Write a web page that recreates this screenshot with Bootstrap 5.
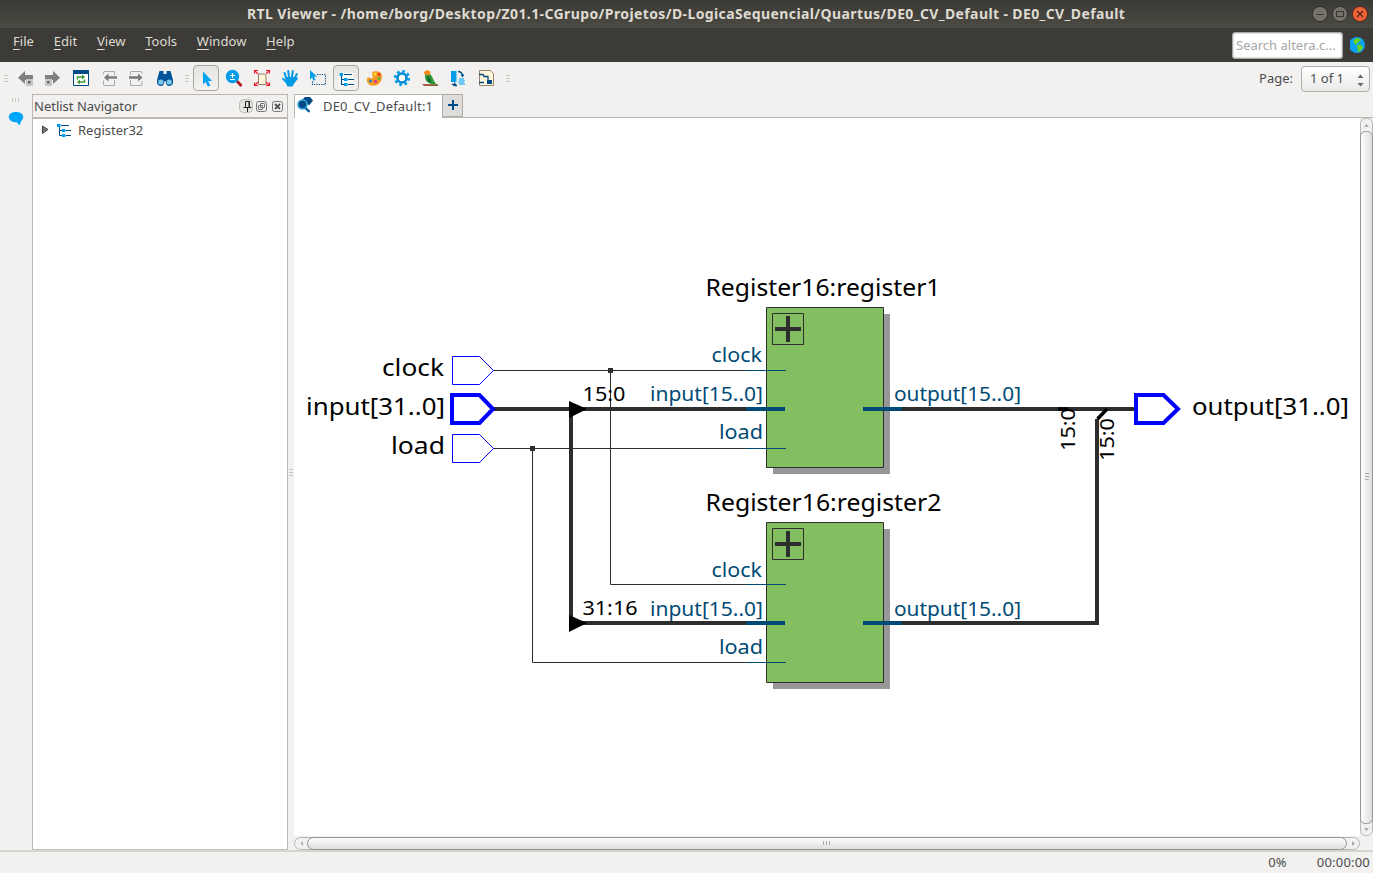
<!DOCTYPE html>
<html lang="en">
<head>
<meta charset="utf-8">
<title>RTL Viewer</title>
<link href="https://cdn.jsdelivr.net/npm/bootstrap@5.3.0/dist/css/bootstrap.min.css" rel="stylesheet">
<script src="https://cdn.jsdelivr.net/npm/bootstrap@5.3.0/dist/js/bootstrap.bundle.min.js"></script>
<style>
body{width:1373px;height:873px;overflow:hidden;background:#f2f1f0;font-family:"Noto Sans","Open Sans",sans-serif;font-size:13px;line-height:18px;color:#4c4c4c}
svg{display:block;flex:none}
.titlebar{height:28px;background:linear-gradient(#3a3934,#4b4a43);color:#dfdbd2;font-weight:700;font-size:14px}
.title-text{margin-left:247px;letter-spacing:.39px;white-space:nowrap}
.winbtns{margin-right:5px;gap:4px}
.menubar{height:34px;background:#3c3b37;color:#dfdbd2}
.menubar a{color:#dfdbd2;text-decoration:none;white-space:nowrap;letter-spacing:.05px}
.menubar a::first-letter{text-decoration:underline;text-underline-offset:3px}
.menus{padding:4px 0 0 13px;gap:19.7px}
.search{width:111px;height:27px;margin:4px 7px 0 0;border:1px solid #aaa8a4;border-radius:3px;background:#fff;color:#a6a6a6;padding:3px 3px;white-space:nowrap;box-shadow:inset 0 0 2px #999}
.toolbar{height:32px}
.tool{width:28px;height:32px}
.tool.on{position:relative}
.tool.on::before{content:"";position:absolute;left:1px;top:3px;width:26px;height:26px;border:1px solid #a9a7a3;border-radius:4px;background:linear-gradient(#e4e3e1,#f4f3f2)}
.tool svg{position:relative}
.page-label{padding-top:3px}
.spin{width:69px;height:26px;border:1px solid #b0aeaa;border-radius:4px;background:linear-gradient(#fff,#ebeae8);padding:3px 4px 0 8px}
.work{height:756px}
.strip{width:32px}
.navpane{width:256px;border:1px solid #bab6b1;border-bottom-color:#c4c1bd;background:#fff}
.navhead{height:24px;background:#f2f1f0;border-bottom:2px solid #bdbab5;padding-left:1px}
.navrow{height:22px}
.tabs{height:24px;border-bottom:1px solid #bab6b1}
.doc-tab{width:148px;height:24px;background:#fff;border:1px solid #bab6b1;border-bottom:0;border-right:0}
.doc-tab span{padding-top:2px;letter-spacing:.18px}
.add-tab{width:21px;height:23px;background:#dfdddb;border:1px solid #b0ada9}
.split{width:6px}
.status{height:23px;border-top:2px solid #d6d4d1;padding:1px 3px 0 0;letter-spacing:.2px;gap:30px}
</style>
</head>
<body>
<div class="d-flex flex-column h-100">
<header class="titlebar d-flex align-items-center justify-content-between">
  <div class="title-text">RTL Viewer - /home/borg/Desktop/Z01.1-CGrupo/Projetos/D-LogicaSequencial/Quartus/DE0_CV_Default - DE0_CV_Default</div>
  <div class="winbtns d-flex">
    <svg width="16" height="16"><circle cx="8" cy="8" r="7.6" fill="#74726b" stroke="#302f2b"/><path d="M4.5 8.5h7" stroke="#34332f"/></svg>
    <svg width="16" height="16"><circle cx="8" cy="8" r="7.6" fill="#74726b" stroke="#302f2b"/><path d="M4.5 5.5h7v5h-7z" fill="none" stroke="#34332f"/></svg>
    <svg width="16" height="16"><circle cx="8" cy="8" r="7.6" fill="#ef6137" stroke="#54291b"/><path d="M5 5l6 6M11 5l-6 6" stroke="#54291b" stroke-width="1.3"/></svg>
  </div>
</header>
<nav class="menubar d-flex justify-content-between">
  <div class="menus d-flex"><a class="d-block">File</a><a class="d-block">Edit</a><a class="d-block">View</a><a class="d-block">Tools</a><a class="d-block">Window</a><a class="d-block">Help</a></div>
  <div class="d-flex">
    <div class="search">Search altera.c...</div>
    <svg width="23" height="34"><circle cx="7" cy="17" r="8" fill="#0aa2f5"/><path d="M3.500 12.500q2-3 5-2.500l1 1.500 2 .5-2 1-1.500 2-2 .5 1 2-3-2zM7 17l3-.5 3 2-1.500 3.500-3.500 2.500-.5-4z" fill="#6ad21d"/></svg>
  </div>
</nav>
<div class="toolbar d-flex">
  <svg width="11" height="32"><path d="M4 13.5h4M4 16.5h4M4 19.5h4" stroke="#c9c7c4"/></svg>
  <div class="tool"><svg width="28" height="32"><path d="M7 15.7L14 9v4h8v5h-8v4z" fill="#7f7f7f"/><path d="M15 17h7v7h-7z" fill="#c6c6c6"/><path d="M17 19h2.5v2.5H17z" fill="#666"/></svg></div>
  <div class="tool"><svg width="28" height="32"><path d="M21 15.7L14 9v4H6v5h8v4z" fill="#7f7f7f"/><path d="M6 17h7v7H6z" fill="#c6c6c6"/><path d="M8 19h2.5v2.5H8z" fill="#666"/></svg></div>
  <div class="tool"><svg width="28" height="32"><path d="M6.500 8.500h15v15h-15z" fill="#fff" stroke="#004b83"/><path d="M6 8h16v4H6z" fill="#004b83"/><path d="M10.500 17.500v-2.500h5M17.500 17.500V20h-5" fill="none" stroke="#3d9b35" stroke-width="1.500"/><path d="M15 12.500l3.200 2.500-3.200 2.500zM13 17.500l-3.200 2.500 3.200 2.500z" fill="#3d9b35"/></svg></div>
  <div class="tool"><svg width="28" height="32"><path d="M8.500 12.500V10.500q0-1 1-1h10V13M8.500 18.500v3.500q0 1.500 1 1.500h10V18" fill="none" stroke="#aaa" /><path d="M9 15.500l4.500-4v2.800H22v2.500h-8.500v2.700z" fill="#7b7b7b"/></svg></div>
  <div class="tool"><svg width="28" height="32"><path d="M7.500 13V9.500h10.500q1 0 1 1V12M7.500 18v5.500h10.500q1 0 1-1V19" fill="none" stroke="#aaa"/><path d="M19.500 15.500l-4.500-4v2.800H6v2.500h9v2.700z" fill="#7b7b7b"/></svg></div>
  <div class="tool"><svg width="28" height="32"><path d="M8.500 9h4v3h3V9h4l2.500 9v3q-1 3-4 3t-3.500-5h-1q-.5 5-3.500 5t-4-3v-3z" fill="#00559a"/><circle cx="9.800" cy="20" r="2.600" fill="#80c8ee"/><circle cx="18.200" cy="20" r="2.600" fill="#80c8ee"/></svg></div>
  <svg width="13" height="32"><path d="M6 13.5h4M6 16.5h4M6 19.5h4" stroke="#c9c7c4"/></svg>
  <div class="tool on"><svg width="28" height="32"><path d="M11 9.500l9 9.500-4 .2 2.500 4.300-2.600 1-2.400-4.500-2.500 2.500z" fill="#00a2f2"/></svg></div>
  <div class="tool"><svg width="28" height="32"><path d="M16 18l5.500 6" stroke="#b41218" stroke-width="2.600"/><circle cx="12.500" cy="14.500" r="6.700" fill="#009ee8"/><path d="M10 13.500h5M12.500 11v5M10 17.500h5" stroke="#fff" stroke-width="1.200"/></svg></div>
  <div class="tool"><svg width="28" height="32"><path d="M10.500 12h6l1.500 2v8.500h-7.500z" fill="#fff6dc" stroke="#9a7c6c"/><path d="M6.500 11.500V8.500H10M18 8.500h3.500V11.500M6.500 20.500v3H10M18 23.500h3.500V20.500M7 9l3 3M21 9l-3 3M7 23l3-3M21 23l-3-3" stroke="#f01a2d" fill="none" stroke-width="1.100"/></svg></div>
  <div class="tool"><svg width="28" height="32"><path d="M10.500 17l-2-6M13 15l-.8-6M16 15l.8-6M18.500 17l2.300-5M11.500 21L7 16.800" fill="none" stroke="#0099e5" stroke-width="2" stroke-linecap="round"/><path d="M10 15h9l2.500.5.500 1-3.500 4.500-2 3.500h-5L9.500 20z" fill="#0099e5"/></svg></div>
  <div class="tool"><svg width="28" height="32"><path d="M13 12.500h8.500V22.500H8.500V18" fill="none" stroke="#004b83" stroke-width="1.200" stroke-dasharray="1.200 1.200"/><path d="M6 8l7 6.500-3 .3 1.500 3.200-2 .8L8.200 15.500 6 17.500z" fill="#009ee8"/></svg></div>
  <div class="tool on"><svg width="28" height="32"><path d="M7 11h14v13H7z" fill="#fff"/><path d="M9.500 13v9.500H13M9.500 17.500H13M12 12.500h8M16 17.500h6M16 22.500h6" fill="none" stroke="#004b83" stroke-width="1.200"/><path d="M7.500 11h3.500v3H7.500zM12 16h3.500v3H12zM12 21h3.500v3H12z" fill="#009ee8"/></svg></div>
  <div class="tool"><svg width="28" height="32"><path d="M13 9.500q8-1.500 9 4 0 6-4 9-5 2.500-9 0-3-3-2-6 1-2 3-.5 3 1 3-1-2-3.500 0-5.500z" fill="#f59c20"/><circle cx="15" cy="12" r="1.500" fill="#f9e13b"/><circle cx="19" cy="12.500" r="1.400" fill="#e12d2d"/><circle cx="19" cy="16.500" r="1.500" fill="#55b43b"/><circle cx="15.500" cy="19.500" r="1.700" fill="#d63f91"/><circle cx="10.500" cy="19" r="1.500" fill="#1b80d0"/></svg></div>
  <div class="tool"><svg width="28" height="32"><circle cx="14" cy="16" r="6.700" fill="none" stroke="#009ee8" stroke-width="2.800" stroke-dasharray="2.630"/><circle cx="14" cy="16" r="4.500" fill="#fff" stroke="#0089d5" stroke-width="2.600"/></svg></div>
  <div class="tool"><svg width="28" height="32"><path d="M6 22l16 .2V24H8z" fill="#a2553e"/><path d="M9 12l5 0q3 3 4 7l3 4-6-1q-6-2-6-7z" fill="#2f9839"/><path d="M12 13l4 8-5-2.500z" fill="#126b2c"/><path d="M7.500 10.500L10 8.500q4-1 4.500 2.500l-2 2.500-3.500-1z" fill="#f08a1a"/></svg></div>
  <div class="tool"><svg width="28" height="32"><path d="M7 9h5.500v11H7z" fill="#009ee8"/><path d="M14 9.500q3.500 0 4.500 3.500M8 22q2 2 5 1.500" fill="none" stroke="#004b83" stroke-width="1.300"/><path d="M16.500 12.500h4l-2 3zM10 20l3 3-3.500 1z" fill="#004b83"/><path d="M15 16h5v2h1v1.500h-1v1.500h1v2h-6v-2h-1v-1.500h1z" fill="#70c7f2"/></svg></div>
  <div class="tool"><svg width="28" height="32"><path d="M7.500 8.500h11l3 3v12h-14z" fill="#fff7dc" stroke="#9b8271"/><path d="M7 12.500h3q2 0 2 2h4v5h2M7 20.500h5" fill="none" stroke="#004b83" stroke-width="1.300"/><path d="M15 18h5v4h-5z" fill="#004b83"/></svg></div>
  <svg width="13" height="32"><path d="M6 13.5h4M6 16.5h4M6 19.5h4" stroke="#c9c7c4"/></svg>
  <div class="ms-auto d-flex pt-1" style="padding-right:3px">
    <div class="page-label me-2">Page:</div>
    <div class="spin d-flex justify-content-between lh-sm"><span>1 of 1</span><svg width="9" height="20"><path d="M1.500 8l3-3.500 3 3.500zM1.500 13l3 3.500 3-3.500z" fill="#666"/></svg></div>
  </div>
</div>
<main class="work d-flex">
  <aside class="strip"><svg width="32" height="40"><path d="M12.500 4v4M15.500 4v4M18.500 4v4" stroke="#c9c7c4"/><ellipse cx="16" cy="23" rx="7.300" ry="5.300" fill="#00a6fa"/><path d="M15 26l7-1-2.500 6.500z" fill="#00a6fa"/></svg></aside>
  <section class="navpane">
    <div class="navhead d-flex justify-content-between align-items-center"><span>Netlist Navigator</span>
      <svg width="48" height="20"><rect x=".5" y="3.500" width="13" height="13" rx="4" fill="#e5e3e0" stroke="#c0bdb9"/><path d="M6.500 5.500h4v6h-4zM4.500 11.500h8M8.500 12v4M10 5v6" fill="none" stroke="#222"/><rect x="17.500" y="5.500" width="10" height="10" rx="2" fill="none" stroke="#777"/><path d="M21.500 7.500h4v4h-4zM19.500 9.500h4v4h-4z" fill="#eee" stroke="#777"/><rect x="33.500" y="5.500" width="10" height="10" rx="2" fill="none" stroke="#777"/><path d="M36 8l5 5M41 8l-5 5" stroke="#555" stroke-width="1.800"/></svg>
    </div>
    <div class="navrow d-flex align-items-center"><svg width="45" height="20"><path d="M9.500 6l5.500 3.500-5.500 4z" fill="#777" stroke="#444"/><path d="M26.500 6v9.500H30M27 10.500H30M28 5.500h8M33 10.500h5M33 15.500h5" fill="none" stroke="#004b83"/><path d="M24 4h3.500v3H24zM29 9h3.500v3H29zM29 14h3.500v3H29z" fill="#009ee8"/></svg><span>Register32</span></div>
  </section>
  <svg class="split" width="6" height="756"><path d="M1 375.500h4M1 378.500h4M1 381.500h4" stroke="#c9c7c4"/></svg>
  <section class="flex-grow-1">
    <div class="tabs d-flex">
      <div class="doc-tab d-flex"><svg width="28" height="22"><path d="M7 5l3-3h5l3 3.500-3.500 4.500-4-1z" fill="#004b83"/><circle cx="7.500" cy="9.500" r="4.500" fill="#004b83" stroke="#39a9e0" stroke-width="1.600"/><path d="M10.500 13l4 4" stroke="#005a9c" stroke-width="2.300"/></svg><span class="text-nowrap">DE0_CV_Default:1</span></div>
      <div class="add-tab"><svg width="19" height="21"><path d="M10 5v10M5 10h10" stroke="#004b83" stroke-width="2"/></svg></div>
    </div>
    <div class="d-flex">
      <svg width="1066" height="718" viewBox="294 118 1066 718" font-family="Noto Sans" font-size="20.500">
        <rect x="294" y="118" width="1066" height="718" fill="#fff"/>
        <path d="M773 314h117v160H773zM773 529h117v160H773z" fill="#979797"/>
        <g fill="#83bf61" stroke="#2d2d2d"><path d="M766.500 307.500h117v160h-117zM766.500 522.500h117v160h-117z"/><path d="M772.500 313.500h31v31h-31zM772.500 528.500h31v31h-31z"/></g>
        <path d="M775 329h26M788 316v26M775 544h26M788 531v26" stroke="#2d2d2d" stroke-width="4"/>
        <path d="M493 370.500h254M493 448.500h254M610.500 370v214.500H747M532.500 448v214.500H747" fill="none" stroke="#2d2d2d"/>
        <path d="M493 409h254M571 409v214M571 623h176M902 409h233M902 623h195V419" fill="none" stroke="#2d2d2d" stroke-width="4"/>
        <path d="M746 370.500h40M746 448.500h40M746 584.500h40M746 662.500h40" stroke="#004b76"/>
        <path d="M746 409h39M746 623h39M863 409h39M863 623h39" stroke="#004b76" stroke-width="4"/>
        <path d="M608 368h5v5h-5zM530 446h5v5h-5z" fill="#2d2d2d"/>
        <path d="M569 401l18 8-18 9zM569 615l18 8-18 9z"/>
        <path d="M1058 409h10M1097.500 419l9.500-10" stroke="#000" stroke-width="3.500"/>
        <path d="M452.500 356.500h27l14 14-14 14h-27zM452.500 434.500h27l14 14-14 14h-27z" fill="#fff" stroke="#00f"/>
        <path d="M452 395h27.500l13.500 14-13.500 14H452zM1136 395h27.500l14.500 14-14.500 14H1136z" fill="#fff" stroke="#00f" stroke-width="4"/>
        <g font-size="24">
          <text x="705.500" y="296" textLength="235" lengthAdjust="spacingAndGlyphs">Register16:register1</text><text x="705.500" y="511" textLength="236" lengthAdjust="spacingAndGlyphs">Register16:register2</text>
          <text x="382" y="376" textLength="62" lengthAdjust="spacingAndGlyphs">clock</text><text x="306" y="415" textLength="139" lengthAdjust="spacingAndGlyphs">input[31..0]</text><text x="391" y="454" textLength="54" lengthAdjust="spacingAndGlyphs">load</text><text x="1192" y="415" textLength="157" lengthAdjust="spacingAndGlyphs">output[31..0]</text>
        </g>
        <g fill="#004b76">
          <text x="711.500" y="362" textLength="50.500" lengthAdjust="spacingAndGlyphs">clock</text><text x="650" y="401" textLength="113" lengthAdjust="spacingAndGlyphs">input[15..0]</text><text x="719" y="439" textLength="44" lengthAdjust="spacingAndGlyphs">load</text><text x="894" y="401" textLength="127" lengthAdjust="spacingAndGlyphs">output[15..0]</text>
          <text x="711.500" y="577" textLength="50.500" lengthAdjust="spacingAndGlyphs">clock</text><text x="650" y="616" textLength="113" lengthAdjust="spacingAndGlyphs">input[15..0]</text><text x="719" y="654" textLength="44" lengthAdjust="spacingAndGlyphs">load</text><text x="894" y="616" textLength="127" lengthAdjust="spacingAndGlyphs">output[15..0]</text>
        </g>
        <text x="582.500" y="401" textLength="43" lengthAdjust="spacingAndGlyphs">15:0</text><text x="582.500" y="615" textLength="55" lengthAdjust="spacingAndGlyphs">31:16</text>
        <text transform="translate(1075 451) rotate(-90)" textLength="43" lengthAdjust="spacingAndGlyphs">15:0</text><text transform="translate(1114 461) rotate(-90)" textLength="43" lengthAdjust="spacingAndGlyphs">15:0</text>
      </svg>
      <svg width="13" height="718"><defs><linearGradient id="sv"><stop stop-color="#fff"/><stop offset="1" stop-color="#dfdddb"/></linearGradient><linearGradient id="sh" x2="0" y2="1"><stop stop-color="#fff"/><stop offset="1" stop-color="#dfdddb"/></linearGradient></defs><rect x=".5" y=".5" width="12" height="717" rx="5" fill="#f2f1f0" stroke="#b8b6b3"/><rect x=".5" y="13.500" width="12" height="692" rx="5" fill="url(#sv)" stroke="#969490"/><path d="M4 9l2.500-3L9 9zM4 710l2.500 3 2.500-3z" fill="#aaa"/><path d="M5 355.500h4M5 358.500h4M5 361.500h4" stroke="#aaa"/></svg>
    </div>
    <svg width="1066" height="14"><rect x=".5" y="1.500" width="1065" height="12" rx="6" fill="#f2f1f0" stroke="#b8b6b3"/><rect x="13.500" y="1.500" width="1039" height="12" rx="6" fill="url(#sh)" stroke="#969490"/><path d="M9 5v5L6.500 7.500zM1058 5v5l3-2.500z" fill="#aaa"/><path d="M529.500 5v4M532.500 5v4M535.500 5v4" stroke="#aaa"/></svg>
  </section>
</main>
<footer class="status d-flex justify-content-end"><span>0%</span><span>00:00:00</span></footer>
</div>
</body>
</html>
